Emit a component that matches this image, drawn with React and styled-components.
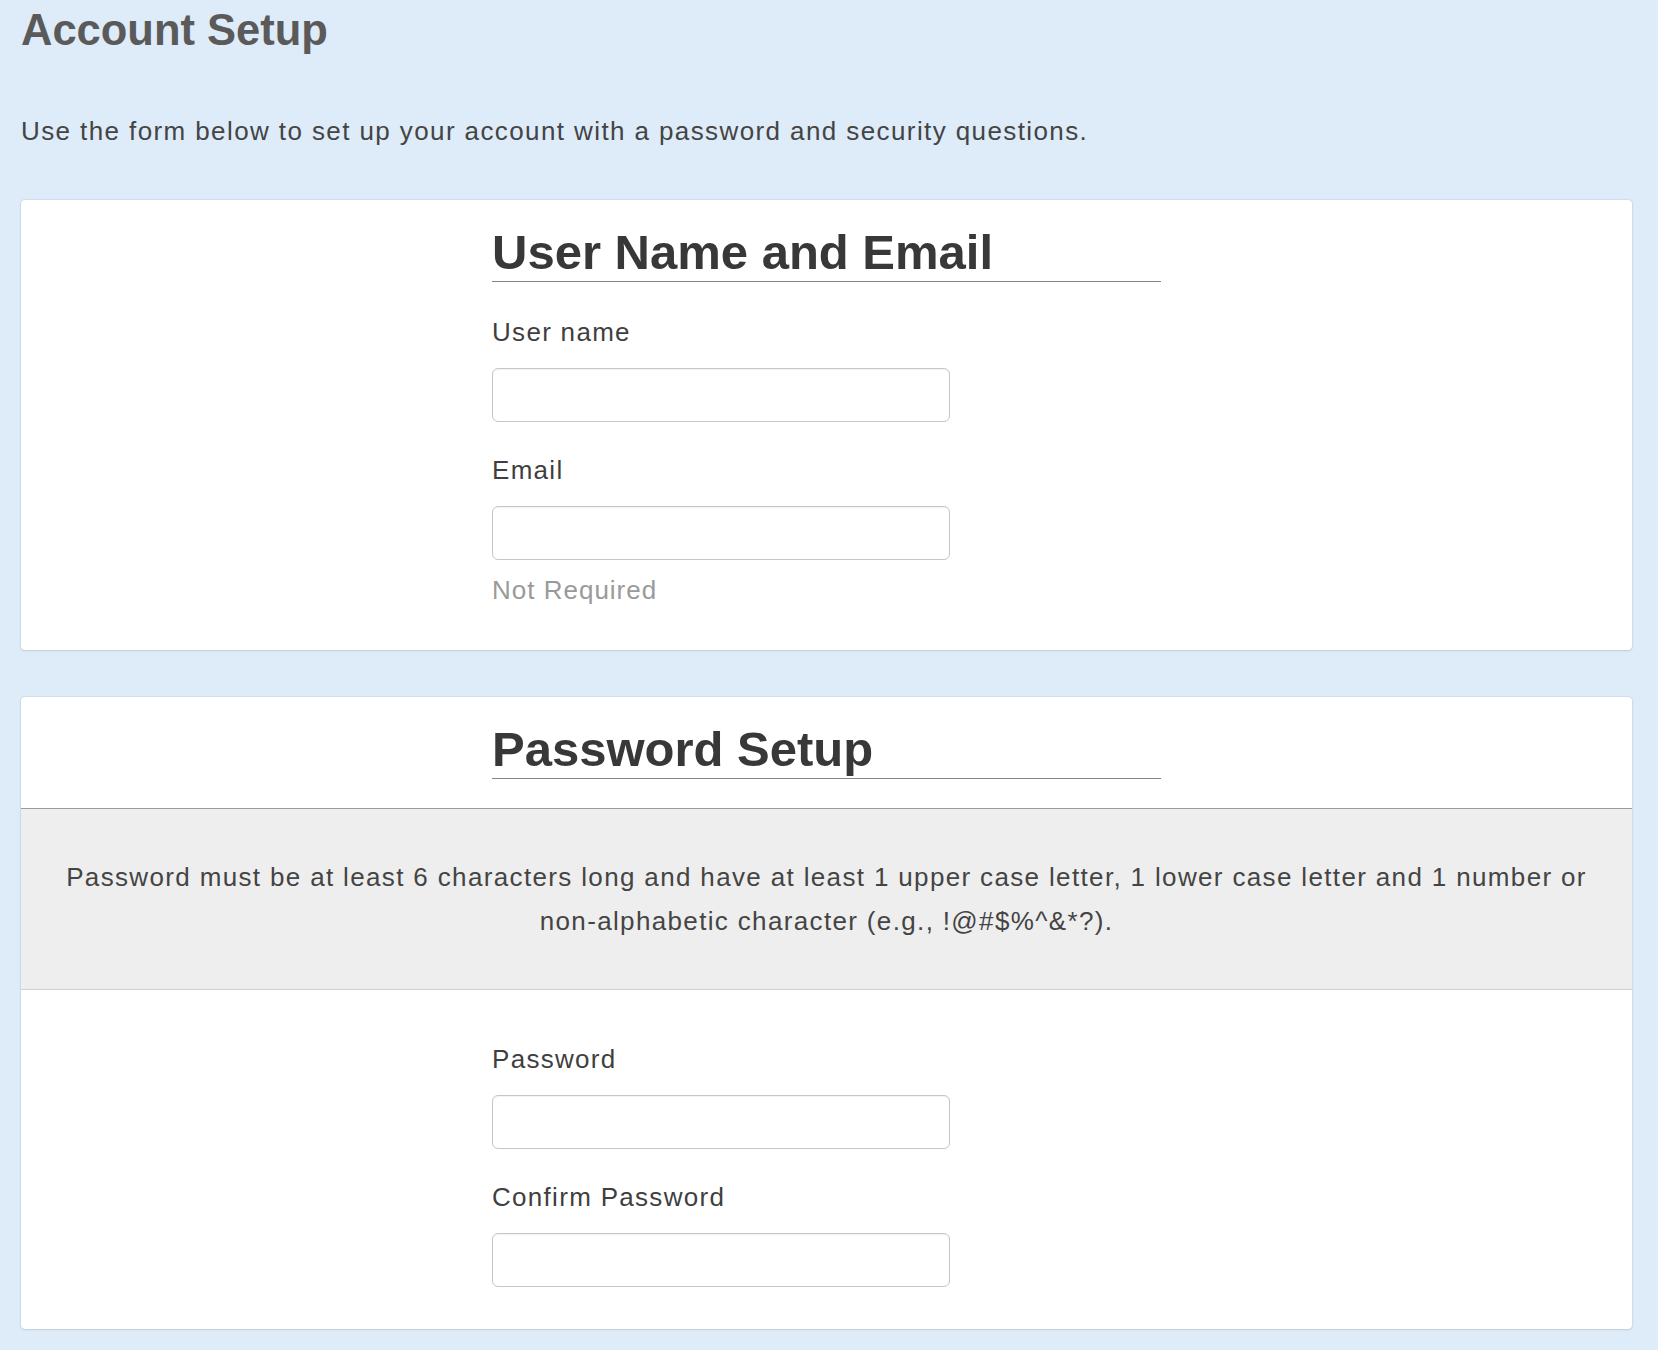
import styled, { createGlobalStyle } from 'styled-components';

const GlobalStyle = createGlobalStyle`
  body {
    margin: 0;
    background: #deebf9;
    font-family: 'Liberation Sans', Arial, Helvetica, sans-serif;
  }
`;

const Page = styled.div`
  min-height: 100vh;
  box-sizing: border-box;
  padding: 5px 26px 20px 21px;
`;

const Title = styled.h1`
  margin: 0;
  font-size: 43.5px;
  line-height: 50px;
  font-weight: 700;
  color: #5a5a5a;
`;

const Intro = styled.p`
  margin: 61px 0 0;
  font-size: 26px;
  line-height: 30px;
  letter-spacing: 1.4px;
  color: #444;
`;

const Card = styled.section`
  margin-top: ${props => props.$gap}px;
  padding: 25px 0 ${props => props.$bottom}px;
  background: #fff;
  border-radius: 4px;
  box-shadow: 0 0 2px rgba(0, 0, 0, 0.2), 0 1px 2px rgba(0, 0, 0, 0.08);
`;

const Column = styled.div`
  width: 669px;
  margin: 0 auto;
  display: flex;
  flex-direction: column;
`;

const SectionTitle = styled.h2`
  margin: 0;
  padding-bottom: 2px;
  border-bottom: 1px solid #858585;
  font-size: 49px;
  line-height: 54px;
  font-weight: 700;
  color: #383838;
`;

const Label = styled.label`
  margin-top: ${props => props.$gap}px;
  font-size: 26px;
  line-height: 30px;
  letter-spacing: 1.3px;
  color: #3f3f3f;
`;

const Input = styled.input`
  box-sizing: border-box;
  width: 458px;
  height: 54px;
  margin-top: 21px;
  padding: 0 12px;
  border: 1px solid #c6c6c6;
  border-radius: 6px;
  background: #fff;
  box-shadow: inset 0 1px 1px rgba(0, 0, 0, 0.05);
  font-family: inherit;
  font-size: 22px;
  outline: none;
`;

const Hint = styled.div`
  margin-top: 15px;
  font-size: 26px;
  line-height: 30px;
  letter-spacing: 1px;
  color: #9a9a9a;
`;

const Notice = styled.div`
  margin-top: 29px;
  padding: 46px 40px;
  background: #eeeeee;
  border-top: 1px solid #9a9a9a;
  border-bottom: 1px solid #cfcfcf;
  text-align: center;
  font-size: 26px;
  line-height: 44px;
  letter-spacing: 1.35px;
  color: #444;
`;

function App() {
  return (
    <>
      <GlobalStyle />
      <Page>
        <Title>Account Setup</Title>
        <Intro>Use the form below to set up your account with a password and security questions.</Intro>

        <Card $gap={54} $bottom={45}>
          <Column>
            <SectionTitle>User Name and Email</SectionTitle>
            <Label $gap={35} htmlFor="username">User name</Label>
            <Input id="username" type="text" />
            <Label $gap={33} htmlFor="email">Email</Label>
            <Input id="email" type="email" />
            <Hint>Not Required</Hint>
          </Column>
        </Card>

        <Card $gap={47} $bottom={42}>
          <Column>
            <SectionTitle>Password Setup</SectionTitle>
          </Column>
          <Notice>
            Password must be at least 6 characters long and have at least 1 upper case letter, 1 lower case letter and 1 number or non-alphabetic character (e.g., !@#$%^&amp;*?).
          </Notice>
          <Column>
            <Label $gap={54} htmlFor="password">Password</Label>
            <Input id="password" type="password" />
            <Label $gap={33} htmlFor="confirm">Confirm Password</Label>
            <Input id="confirm" type="password" />
          </Column>
        </Card>
      </Page>
    </>
  );
}

export default App;
